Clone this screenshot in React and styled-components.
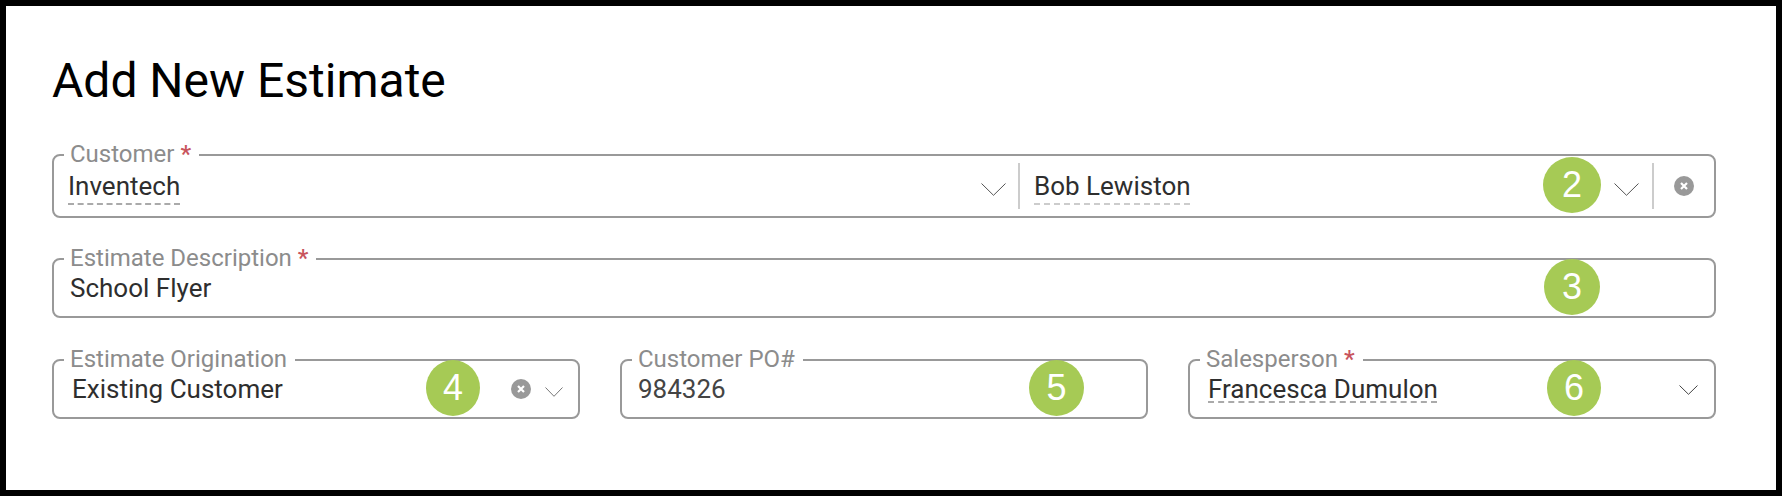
import React from 'react';
import styled, { createGlobalStyle } from 'styled-components';

const GlobalStyle = createGlobalStyle`
  html, body {
    margin: 0;
    padding: 0;
    background: #000;
  }
  * {
    box-sizing: border-box;
  }
`;

const Chevron = ({ width = 25, height = 13, color = '#555', top = 0 }) => (
  <ChevronSvg $top={top} width={width} height={height} viewBox={`0 0 ${width} ${height}`} fill="none">
    <path d={`M0.5 0.5L${width / 2} ${height - 0.7}L${width - 0.5} 0.5`} stroke={color} strokeWidth="1" />
  </ChevronSvg>
);

const ClearIcon = () => (
  <svg width="20" height="20" viewBox="0 0 20 20">
    <circle cx="10" cy="10" r="10" fill="#999" />
    <path d="M7 7L13 13M13 7L7 13" stroke="#fff" strokeWidth="2.2" />
  </svg>
);

const App = () => (
  <Page>
    <GlobalStyle />
    <Card>
      <Title>Add New Estimate</Title>

      <Field $height={78} $gap={26}>
        <Legend>Customer <Star>*</Star></Legend>
        <Value $w={913}>
          <Dashed $offset={8}>Inventech</Dashed>
        </Value>
        <Chevron top={6} />
        <Divider $ml={12} />
        <Value $ml={14} $flex={1}>
          <Dashed $offset={8} $color="#ccc">Bob Lewiston</Dashed>
        </Value>
        <Chevron top={6} />
        <Divider $ml={13} />
        <ClearSlot $ml={20} $mr={20}>
          <ClearIcon />
        </ClearSlot>
        <Badge $right={113} $width={58} $top={-13}>2</Badge>
      </Field>

      <Field $height={74} $gap={27}>
        <Legend>Estimate Description <Star>*</Star></Legend>
        <Value $ml={2}>School Flyer</Value>
        <Badge $right={114}>3</Badge>
      </Field>

      <ThreeCols>
        <Field $height={74}>
          <Legend>Estimate Origination</Legend>
          <Value $ml={4} $flex={1}>Existing Customer</Value>
          <ClearSlot $mr={14}>
            <ClearIcon />
          </ClearSlot>
          <Chevron width={18} height={10} color="#777" top={6} />
          <Spacer $w={15} />
          <Badge $right={98} $width={54}>4</Badge>
        </Field>

        <Field $height={74}>
          <Legend>Customer PO#</Legend>
          <Value $ml={2} $color="#444">984326</Value>
          <Badge $right={62} $width={55}>5</Badge>
        </Field>

        <Field $height={74}>
          <Legend>Salesperson <Star>*</Star></Legend>
          <Value $ml={4} $flex={1}>
            <Dashed $offset={3}>Francesca Dumulon</Dashed>
          </Value>
          <Chevron width={19} height={10} color="#444" top={2} />
          <Spacer $w={16} />
          <Badge $right={113} $width={54}>6</Badge>
        </Field>
      </ThreeCols>
    </Card>
  </Page>
);

const Page = styled.div`
  width: 100vw;
  height: 100vh;
  padding: 6px;
  background: #000;
  font-family: Roboto, "Liberation Sans", sans-serif;
`;

const Card = styled.div`
  height: 100%;
  padding: 47px 60px 0 46px;
  background: #fff;
`;

const Title = styled.h1`
  margin: 0 0 31px 0;
  font-size: 48px;
  line-height: 56px;
  font-weight: 400;
  color: #000;
`;

const Field = styled.fieldset`
  position: relative;
  display: flex;
  align-items: center;
  min-width: 0;
  height: ${(p) => p.$height}px;
  margin: 0 0 ${(p) => p.$gap || 0}px 0;
  padding: 0 0 14px 14px;
  border: 2px solid #999;
  border-radius: 8px;
`;

const Legend = styled.legend`
  margin-left: -4px;
  padding: 0 8px 2px 6px;
  font-size: 24px;
  line-height: 28px;
  color: #8c8c8c;
`;

const Star = styled.span`
  color: #c8545c;
  font-weight: 500;
`;

const Value = styled.div`
  flex: ${(p) => p.$flex || 'none'};
  width: ${(p) => (p.$w ? `${p.$w}px` : 'auto')};
  margin-left: ${(p) => p.$ml || 0}px;
  font-size: 26px;
  line-height: 30px;
  color: ${(p) => p.$color || '#2e2e2e'};
`;

const Dashed = styled.span`
  text-decoration: underline dashed ${(p) => p.$color || '#aaa'} 2px;
  text-decoration-skip-ink: none;
  text-underline-offset: ${(p) => p.$offset}px;
`;

const ChevronSvg = styled.svg`
  display: block;
  flex: none;
  margin-top: ${(p) => p.$top}px;
`;

const Divider = styled.div`
  flex: none;
  width: 2px;
  height: 46px;
  margin-left: ${(p) => p.$ml}px;
  background: #ccc;
`;

const ClearSlot = styled.div`
  display: flex;
  flex: none;
  margin-left: ${(p) => p.$ml || 0}px;
  margin-right: ${(p) => p.$mr || 0}px;
`;

const Spacer = styled.div`
  flex: none;
  width: ${(p) => p.$w}px;
`;

const Badge = styled.div`
  position: absolute;
  right: ${(p) => p.$right}px;
  top: ${(p) => p.$top ?? -15}px;
  display: flex;
  align-items: center;
  justify-content: center;
  width: ${(p) => p.$width || 56}px;
  height: 56px;
  border-radius: 50%;
  background: #a6ca55;
  font-family: "Liberation Sans", sans-serif;
  font-size: 36px;
  color: #fff;
`;

const ThreeCols = styled.div`
  display: grid;
  grid-template-columns: repeat(3, 1fr);
  column-gap: 40px;
`;

export default App;
